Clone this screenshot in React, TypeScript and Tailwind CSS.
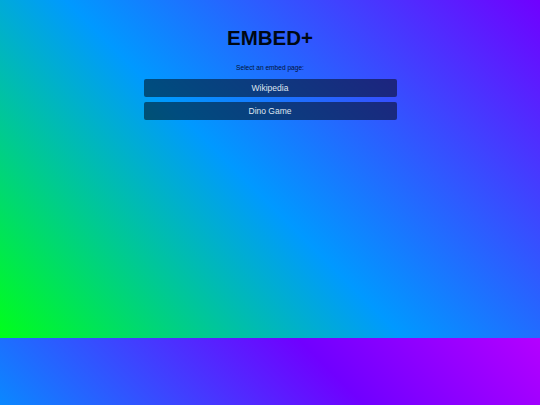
export default function App() {
  const pages = ["Wikipedia", "Dino Game"];

  return (
    <div className="w-[540px] font-['Liberation_Sans',Arial,sans-serif]">
      <main className="h-[338px] bg-[linear-gradient(45deg,#00ff1a_0%,#0099ff_46%,#7000ff_100%)] flex flex-col items-center pt-[27px]">
        <h1 className="text-[20.5px] leading-[22px] font-bold text-[#000814]">EMBED+</h1>
        <p className="mt-[15px] text-[6.6px] leading-[8px] text-[#001238]">Select an embed page:</p>
        <div className="mt-[7px] w-[253px] flex flex-col gap-[4.5px]">
          {pages.map((p) => (
            <button
              key={p}
              className="h-[18px] w-full rounded-[2px] bg-black/50 text-[8.5px] leading-[18px] text-[#dfe5f0]"
            >
              {p}
            </button>
          ))}
        </div>
      </main>
      <div className="h-[67px] bg-[linear-gradient(45deg,#0a88ff_0%,#7000ff_60%,#b400ff_100%)]" />
    </div>
  );
}
